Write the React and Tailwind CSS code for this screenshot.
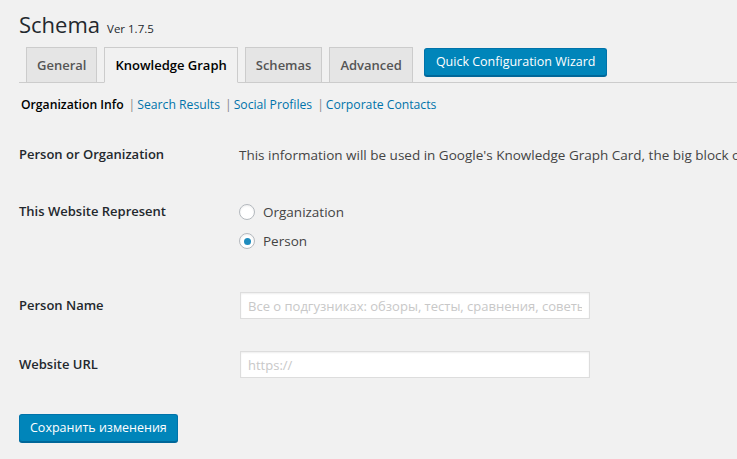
import React from 'react';

const font = { fontFamily: '"Open Sans", "Noto Sans", Arial, sans-serif' };

const Tab = ({ label, active }) => (
  <a
    className={
      active
        ? 'ml-[7px] -mb-px h-[36px] px-[10px] border border-[#ccc] border-b-[#f1f1f1] bg-[#f1f1f1] text-[13px] font-semibold text-black leading-[34px]'
        : 'ml-[7px] -mb-px h-[36px] px-[10px] border border-[#ccc] bg-[#e5e5e5] text-[13px] font-semibold text-[#555] leading-[34px]'
    }
  >
    {label}
  </a>
);

const Radio = ({ checked, label }) => (
  <label className="flex items-center h-[20px] gap-[8px] text-[13.5px] text-[#444]">
    <span className="w-[16px] h-[16px] rounded-full border border-[#b4b9be] bg-white flex items-center justify-center shadow-[inset_0_1px_2px_rgba(0,0,0,0.07)]">
      {checked && <span className="w-[7px] h-[7px] rounded-full bg-[#1e8cbe]" />}
    </span>
    {label}
  </label>
);

export default function App() {
  return (
    <div style={font} className="w-[737px] h-[459px] overflow-hidden bg-[#f1f1f1] pl-[19px] text-[#23282d]">
      <h1 className="pt-[8px] h-[40px] flex items-baseline gap-[7px]">
        <span className="text-[22px] text-[#23282d]">Schema</span>
        <span className="text-[11.5px] text-[#23282d]">Ver 1.7.5</span>
      </h1>

      <div className="mt-[8px] flex items-end border-b border-[#ccc] h-[35px]">
        <Tab label="General" />
        <Tab label="Knowledge Graph" active />
        <Tab label="Schemas" />
        <Tab label="Advanced" />
        <button className="ml-[11px] mb-[7px] self-start h-[28px] px-[11px] rounded-[3px] bg-[#0085ba] border border-[#0073aa] border-b-[#006799] shadow-[0_1px_0_#006799] text-white text-[12.5px]">
          Quick Configuration Wizard
        </button>
      </div>

      <div className="mt-[12px] h-[20px] pl-[2px] flex items-center text-[12.2px] whitespace-nowrap">
        <span className="text-black font-semibold">Organization Info</span>
        <span className="text-[#888] ml-[5px]">|</span>
        <span className="text-[#0073aa] ml-[2px]">Search Results</span>
        <span className="text-[#888] ml-[5px]">|</span>
        <span className="text-[#0073aa] ml-[2px]">Social Profiles</span>
        <span className="text-[#888] ml-[5px]">|</span>
        <span className="text-[#0073aa] ml-[2px]">Corporate Contacts</span>
      </div>

      <div className="mt-[29px] flex h-[22px] items-center whitespace-nowrap">
        <div className="w-[220px] shrink-0 text-[13px] font-semibold">Person or Organization</div>
        <div className="text-[13.5px] text-[#444]">
          This information will be used in Google's Knowledge Graph Card, the big block of information you see on the right side of the search results.
        </div>
      </div>

      <div className="mt-[35px] flex">
        <div className="w-[220px] shrink-0 h-[22px] flex items-center text-[13px] font-semibold">This Website Represent</div>
        <div className="flex flex-col gap-[9px] pt-[1px]">
          <Radio label="Organization" />
          <Radio label="Person" checked />
        </div>
      </div>

      <div className="mt-[41px] flex items-center">
        <div className="w-[221px] shrink-0 text-[13px] font-semibold">Person Name</div>
        <input
          className="w-[350px] h-[27px] px-[7px] bg-white border border-[#ddd] shadow-[inset_0_1px_2px_rgba(0,0,0,0.07)] text-[13px] placeholder:text-[#c8c8c8] outline-none"
          placeholder="Все о подгузниках: обзоры, тесты, сравнения, советы"
        />
      </div>

      <div className="mt-[32px] flex items-center">
        <div className="w-[221px] shrink-0 text-[13px] font-semibold">Website URL</div>
        <input
          className="w-[350px] h-[27px] px-[7px] bg-white border border-[#ddd] shadow-[inset_0_1px_2px_rgba(0,0,0,0.07)] text-[13px] placeholder:text-[#c8c8c8] outline-none"
          placeholder="https://"
        />
      </div>

      <button className="mt-[36px] h-[28px] px-[10px] rounded-[3px] bg-[#0085ba] border border-[#0073aa] border-b-[#006799] shadow-[0_1px_0_#006799] text-white text-[12.5px]">
        Сохранить изменения
      </button>
    </div>
  );
}
